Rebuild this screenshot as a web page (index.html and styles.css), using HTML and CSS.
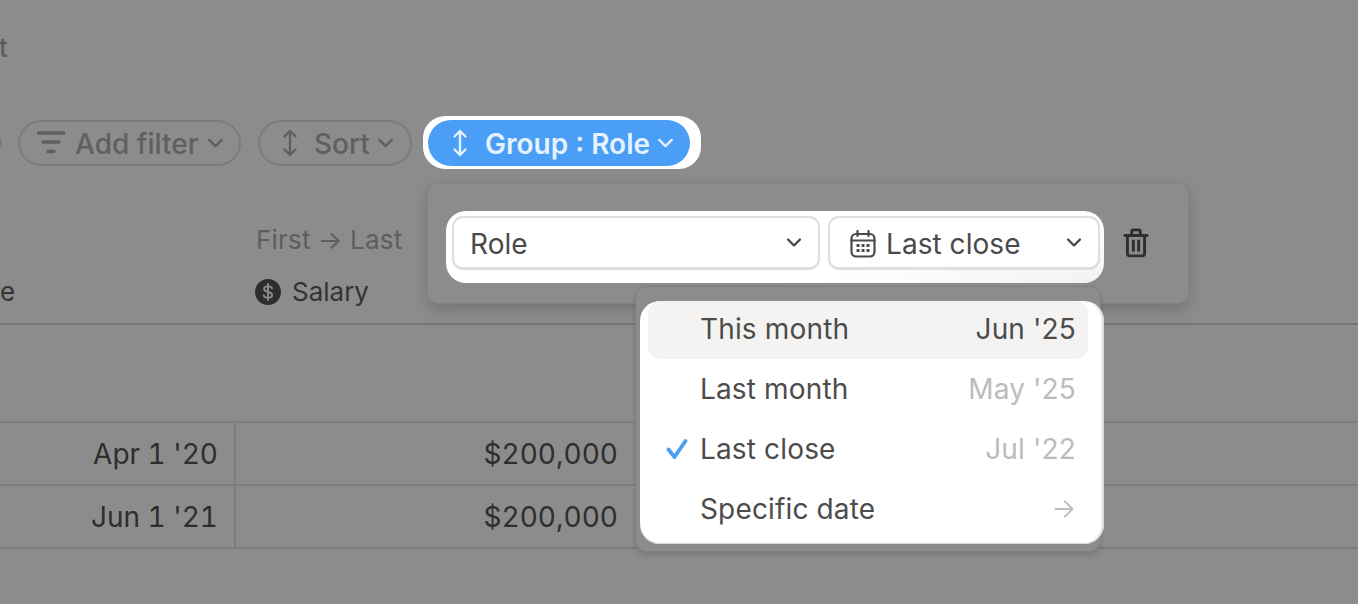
FILE: index.html
```html
<!DOCTYPE html>
<html lang="en">
<head>
<meta charset="utf-8">
<title>Group by role</title>
<link rel="stylesheet" href="styles.css">
</head>
<body>
<main class="page">
  <h1 class="title">t</h1>
  <div class="toolbar">
    <span class="chip-stub"></span>
    <button class="chip chip-filter">
      <svg class="icon-filter" viewBox="0 0 28 26" width="28" height="26"><path d="M1.5 3h25M6 12h16M11 21.500h6" fill="none" stroke="currentColor" stroke-width="3.400" stroke-linecap="round"/></svg>
      <span>Add filter</span>
      <svg class="chev" viewBox="0 0 12 8" width="15" height="10"><path d="M1 1.500 6 6.500 11 1.500" fill="none" stroke="currentColor" stroke-width="1.800" stroke-linecap="round" stroke-linejoin="round"/></svg>
    </button>
    <button class="chip chip-sort">
      <svg viewBox="0 0 16 28" width="16" height="28"><path d="M8 2v24M2.500 7.500 8 2l5.500 5.500M2.500 20.500 8 26l5.500-5.500" fill="none" stroke="currentColor" stroke-width="2.400" stroke-linecap="round" stroke-linejoin="round"/></svg>
      <span>Sort</span>
      <svg class="chev" viewBox="0 0 12 8" width="15" height="10"><path d="M1 1.500 6 6.500 11 1.500" fill="none" stroke="currentColor" stroke-width="1.800" stroke-linecap="round" stroke-linejoin="round"/></svg>
    </button>
    <div class="ring">
      <button class="chip chip-group">
        <svg viewBox="0 0 16 28" width="16" height="28"><path d="M8 2v24M2.500 7.500 8 2l5.500 5.500M2.500 20.500 8 26l5.500-5.500" fill="none" stroke="currentColor" stroke-width="2.400" stroke-linecap="round" stroke-linejoin="round"/></svg>
        <span>Group : Role</span>
        <svg class="chev" viewBox="0 0 12 8" width="15" height="10"><path d="M1 1.500 6 6.500 11 1.500" fill="none" stroke="currentColor" stroke-width="1.800" stroke-linecap="round" stroke-linejoin="round"/></svg>
      </button>
    </div>
  </div>

  <div class="table">
    <div class="head-top"><span class="col-a"></span><span class="first-last">First → Last</span></div>
    <div class="head">
      <span class="col-a head-cut">e</span>
      <span class="salary">
        <svg viewBox="0 0 26 26" width="26" height="26"><circle cx="13" cy="13" r="13" fill="#2e2e2e"/><path d="M17 9.200c-.6-1.300-2-2-4-2-2.300 0-3.900 1.100-3.900 2.800 0 3.900 8 1.900 8 5.900 0 1.800-1.700 2.900-4.100 2.900-2.100 0-3.600-.8-4.200-2.200M13 5v16" fill="none" stroke="#8c8c8c" stroke-width="1.900" stroke-linecap="round"/></svg>
        Salary
      </span>
    </div>
    <div class="spacer"></div>
    <div class="row"><span class="col-a cell">Apr 1 '20</span><span class="col-b cell">$200,000</span></div>
    <div class="row"><span class="col-a cell">Jun 1 '21</span><span class="col-b cell">$200,000</span></div>
  </div>

  <section class="pop-group">
    <div class="spot">
      <div class="select select-role"><span>Role</span>
        <svg class="chev" viewBox="0 0 14 9" width="14" height="9"><path d="M1 1.500 7 7.500 13 1.500" fill="none" stroke="currentColor" stroke-width="2.400" stroke-linecap="round" stroke-linejoin="round"/></svg>
      </div>
      <div class="select select-date">
        <span class="date-label">
          <svg viewBox="0 0 26 28" width="26" height="28"><g fill="none" stroke="#4a4a4a" stroke-width="2.200"><rect x="1.500" y="4" width="23" height="22.500" rx="4.500"/><path d="M7.500 1v5M18.500 1v5M1.500 10.500h23" stroke-linecap="round"/></g><g fill="#4a4a4a"><rect x="6.500" y="14" width="3" height="3"/><rect x="11.500" y="14" width="3" height="3"/><rect x="16.500" y="14" width="3" height="3"/><rect x="6.500" y="19" width="3" height="3"/><rect x="11.500" y="19" width="3" height="3"/><rect x="16.500" y="19" width="3" height="3"/></g></svg>
          Last close
        </span>
        <svg class="chev" viewBox="0 0 14 9" width="14" height="9"><path d="M1 1.500 7 7.500 13 1.500" fill="none" stroke="currentColor" stroke-width="2.400" stroke-linecap="round" stroke-linejoin="round"/></svg>
      </div>
    </div>
    <svg class="trash" viewBox="0 0 24 28" width="26" height="30"><g fill="none" stroke="#2e2e2e" stroke-width="2.700" stroke-linecap="round" stroke-linejoin="round"><path d="M1.500 7h21M8 6.500V3.500c0-1 .8-1.800 1.800-1.800h4.400c1 0 1.800.8 1.800 1.800v3M4 7v16.500C4 25 5 26 6.500 26h11c1.500 0 2.500-1 2.500-2.500V7M9.500 12v9M14.500 12v9"/></g></svg>
  </section>

  <section class="pop-dim"></section>
  <ul class="menu">
    <li class="item item-active"><span class="check"></span><span class="item-name">This month</span><span class="item-val val-dark">Jun '25</span></li>
    <li class="item"><span class="check"></span><span class="item-name">Last month</span><span class="item-val">May '25</span></li>
    <li class="item"><span class="check"><svg viewBox="0 0 22 22" width="22" height="22"><path d="M2.500 11.500 8.500 19 19.500 3" fill="none" stroke="#4b9ef5" stroke-width="3.800" stroke-linecap="round" stroke-linejoin="round"/></svg></span><span class="item-name">Last close</span><span class="item-val">Jul '22</span></li>
    <li class="item"><span class="check"></span><span class="item-name">Specific date</span>
      <svg class="arrow" viewBox="0 0 20 18" width="20" height="18"><path d="M1.500 9h17M11 1.500 18.500 9 11 16.500" fill="none" stroke="#bdbdbd" stroke-width="1.900" stroke-linecap="round" stroke-linejoin="round"/></svg>
    </li>
  </ul>
</main>
</body>
</html>
```
FILE: styles.css
```css
* { box-sizing: border-box; }
html, body { margin: 0; padding: 0; }
body {
  background: #8c8c8c;
  font-family: Inter, "Liberation Sans", sans-serif;
  overflow: hidden;
}
.page {
  position: relative;
  width: 1358px;
  height: 604px;
  overflow: hidden;
  display: flex;
  flex-direction: column;
}
.title {
  margin: 31px 0 0;
  height: 89px;
  font-size: 26px;
  line-height: 34px;
  font-weight: 500;
  color: #5c5c5c;
  margin-left: -1px;
}
.toolbar {
  display: flex;
  align-items: center;
  height: 46px;
  margin-left: -14px;
}
.chip-stub {
  width: 16px;
  height: 16px;
  border: 2px solid #7a7a7a;
  border-radius: 50%;
  margin-right: 16px;
}
.chip {
  display: flex;
  align-items: center;
  height: 46px;
  padding: 0;
  border: 2px solid #7c7c7c;
  border-radius: 23px;
  background: transparent;
  color: #5f5f5f;
  font: 500 28px/36px Inter, "Liberation Sans", sans-serif;
}
.chip span { position: relative; top: 1px; }
.chip-filter { width: 223px; padding-left: 17px; gap: 10px; }
.chip-sort { width: 154px; margin-left: 17px; padding-left: 22px; gap: 16px; }
.chip-sort .chev { margin-left: -8px; }
.ring {
  margin-left: 11px;
  padding: 4px 11px 3px 5px;
  margin-top: -1px;
  background: #fff;
  border-radius: 22px;
  display: flex;
}
.chip-group {
  width: 262px;
  border: 0;
  background: #4b9ef5;
  color: #e4f1fe;
  font-weight: 600;
  padding-left: 24px;
  gap: 17px;
}
.chip-group .chev { margin-left: -9px; }

.table { margin-top: 56px; color: #2e2e2e; font-size: 28px; font-variant-numeric: tabular-nums; }
.head-top { display: flex; height: 34px; align-items: center; }
.col-a { width: 235px; flex: none; }
.first-last { margin-left: 21px; color: #5e5e5e; font-size: 26px; letter-spacing: .2px; }
.head {
  display: flex;
  align-items: center;
  height: 69px;
  padding-top: 4px;
  border-bottom: 2px solid #757575;
  font-size: 26px;
}
.head-cut { color: #333; }
.salary { display: flex; align-items: center; gap: 11px; margin-left: 20px; color: #333; }
.spacer { height: 96px; }
.row {
  display: flex;
  height: 63px;
  border-top: 2px solid #7e7e7e;
}
.row:last-child { height: 65px; border-bottom: 2px solid #7e7e7e; }
.cell { display: flex; align-items: center; justify-content: flex-end; padding-right: 16px; }
.col-a.cell { border-right: 2px solid #7e7e7e; width: 236px; }
.col-b { width: 400px; padding-right: 18px; }

.pop-group {
  position: absolute;
  left: 428px;
  top: 183px;
  width: 760px;
  height: 120px;
  padding: 28px 0 0 18px;
  background: #8c8c8c;
  border-radius: 10px;
  box-shadow: 0 0 0 1px #828282, 0 6px 16px rgba(0,0,0,.18);
  display: flex;
  align-items: flex-start;
}
.spot {
  width: 658px;
  height: 72px;
  padding: 5px 4px 13px 6px;
  background: linear-gradient(170deg, #fff 70%, #f1f1f1);
  border-radius: 20px;
  display: flex;
  gap: 8px;
}
.select {
  display: flex;
  align-items: center;
  justify-content: space-between;
  height: 54px;
  padding: 0 17px 0 16px;
  border: 2px solid #dedede;
  border-bottom-width: 3px;
  border-radius: 11px;
  background: #fff;
  color: #4a4a4a;
  font-size: 28px;
  line-height: 36px;
  letter-spacing: .05px;
}
.select > span { position: relative; top: 1px; }
.select-role { width: 368px; }
.select-date { width: 272px; padding-left: 20px; }
.date-label { display: flex; align-items: center; gap: 10px; }
.trash { margin: 17px 0 0 19px; }

.pop-dim {
  position: absolute;
  left: 636px;
  top: 287px;
  width: 464px;
  height: 264px;
  background: #8c8c8c;
  border-radius: 10px;
  box-shadow: 0 0 0 1px #808080, 0 3px 6px rgba(0,0,0,.18);
}
.menu {
  position: absolute;
  left: 640px;
  top: 301px;
  width: 464px;
  height: 243px;
  margin: 0;
  padding: 0 16px 0 8px;
  list-style: none;
  background: #fff;
  border-radius: 20px;
  box-shadow: inset -4px 0 2px -2px #d8d8d8, inset 0 -1px 1px #d8d8d8;
}
.item {
  display: flex;
  align-items: center;
  height: 60px;
  padding: 0 12px 4px 18px;
  color: #4c4c4c;
  font-size: 28px;
  line-height: 36px;
  letter-spacing: .15px;
}
.item-active { height: 58px; margin-bottom: 2px; padding-bottom: 2px; background: #f4f3f2; border-radius: 12px; }
.check { width: 35px; flex: none; display: flex; align-items: center; }
.item-name { flex: 1; margin-left: -1px; }
.item-val { color: #bcbcbc; }
.val-dark { color: #4c4c4c; }
.arrow { margin-right: 2px; }
```
